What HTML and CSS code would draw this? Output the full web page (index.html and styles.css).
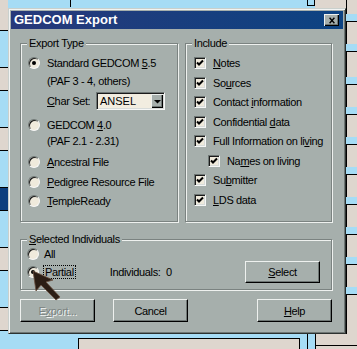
FILE: index.html
```html
<!DOCTYPE html>
<html lang="en">
<head>
  <meta charset="UTF-8" />
  <title>GEDCOM Export</title>
  <link rel="stylesheet" href="styles.css">
</head>
<body>
  <div class="desktop">
    <div class="strip-left">
      <div class="lcell lcell-first"></div>
      <div class="lcell"></div>
      <div class="lcell"></div>
      <div class="lcell lcell-selected"></div>
      <div class="lcell"></div>
      <div class="lcell"></div>
    </div>

    <div class="strip-top">
      <div class="top-gap"></div>
      <div class="top-line"></div>
      <div class="top-fill"></div>
      <div class="top-box"></div>
      <div class="top-cell"></div>
    </div>

    <div class="strip-right">
      <div class="rcell rcell-first"></div>
      <div class="rcell"></div>
      <div class="rcell rcell-tall"></div>
      <div class="rcell"></div>
      <div class="rcell"></div>
      <div class="rcell"></div>
      <div class="rcell"></div>
      <div class="rcell"></div>
      <div class="rcell"></div>
      <div class="rcell"></div>
      <div class="rcell rcell-last"></div>
    </div>

    <div class="dialog">
      <div class="titlebar">
        <span class="title">GEDCOM Export</span>
        <span class="close-btn">
          <svg viewBox="0 0 10 8"><path d="M2 0.5 L8 7.5 M8 0.5 L2 7.5"/></svg>
        </span>
      </div>

      <div class="dialog-body">
        <div class="group-row">
          <div class="group group-export">
            <span class="legend">Export Type</span>
            <div class="opt">
              <span class="radio on"></span>
              <span>Standard GEDCOM <u>5</u>.5</span>
            </div>
            <div class="opt-note note-first">(PAF 3 - 4, others)</div>
            <div class="charset-row">
              <span class="charset-label"><u>C</u>har Set:</span>
              <div class="combo">
                <span class="combo-value">ANSEL</span>
                <span class="combo-btn">
                  <svg viewBox="0 0 12 14"><polygon points="3,6 10,6 6.5,9.5"/></svg>
                </span>
              </div>
            </div>
            <div class="opt opt-gedcom4">
              <span class="radio"></span>
              <span>GEDCOM <u>4</u>.0</span>
            </div>
            <div class="opt-note">(PAF 2.1 - 2.31)</div>
            <div class="opt opt-ancestral">
              <span class="radio"></span>
              <span><u>A</u>ncestral File</span>
            </div>
            <div class="opt opt-pedigree">
              <span class="radio"></span>
              <span><u>P</u>edigree Resource File</span>
            </div>
            <div class="opt opt-temple">
              <span class="radio"></span>
              <span><u>T</u>empleReady</span>
            </div>
          </div>

          <div class="group group-include">
            <span class="legend">Include</span>
            <div class="check-row">
              <span class="check"><svg viewBox="0 0 8 8"><polyline points="1,3.5 3,5.5 7,1.5"/></svg></span>
              <span><u>N</u>otes</span>
            </div>
            <div class="check-row">
              <span class="check"><svg viewBox="0 0 8 8"><polyline points="1,3.5 3,5.5 7,1.5"/></svg></span>
              <span>So<u>u</u>rces</span>
            </div>
            <div class="check-row">
              <span class="check"><svg viewBox="0 0 8 8"><polyline points="1,3.5 3,5.5 7,1.5"/></svg></span>
              <span>Contact <u>i</u>nformation</span>
            </div>
            <div class="check-row">
              <span class="check"><svg viewBox="0 0 8 8"><polyline points="1,3.5 3,5.5 7,1.5"/></svg></span>
              <span>Confidential <u>d</u>ata</span>
            </div>
            <div class="check-row">
              <span class="check"><svg viewBox="0 0 8 8"><polyline points="1,3.5 3,5.5 7,1.5"/></svg></span>
              <span>Full Information on li<u>v</u>ing</span>
            </div>
            <div class="check-row check-nested">
              <span class="check"><svg viewBox="0 0 8 8"><polyline points="1,3.5 3,5.5 7,1.5"/></svg></span>
              <span>Na<u>m</u>es on living</span>
            </div>
            <div class="check-row">
              <span class="check"><svg viewBox="0 0 8 8"><polyline points="1,3.5 3,5.5 7,1.5"/></svg></span>
              <span>Su<u>b</u>mitter</span>
            </div>
            <div class="check-row">
              <span class="check"><svg viewBox="0 0 8 8"><polyline points="1,3.5 3,5.5 7,1.5"/></svg></span>
              <span><u>L</u>DS data</span>
            </div>
          </div>
        </div>

        <div class="group group-selected">
          <span class="legend"><u>S</u>elected Individuals</span>
          <div class="sel-row">
            <span class="radio"></span>
            <span class="sel-label">All</span>
          </div>
          <div class="sel-row sel-row-partial">
            <span class="radio on"></span>
            <span class="sel-label focus">Partial</span>
            <span class="count">Individuals:&nbsp; 0</span>
            <span class="btn btn-select"><u>S</u>elect</span>
          </div>
        </div>

        <div class="button-row">
          <span class="btn btn-disabled">E<u>x</u>port...</span>
          <span class="btn btn-cancel">Cancel</span>
          <span class="btn btn-help"><u>H</u>elp</span>
        </div>
      </div>

      <svg class="cursor" viewBox="0 0 32 34">
        <polygon points="3,3 6,23 11,17 26,32 30,29 16,14 23,12"/>
      </svg>
    </div>

    <div class="strip-bottom">
      <div class="bottom-gap"></div>
      <div class="bottom-box"></div>
      <div class="bottom-gap-s"></div>
      <div class="bottom-line"></div>
      <div class="bottom-gap-s"></div>
      <div class="bottom-cell"><div class="bottom-cell-top"></div></div>
    </div>
  </div>
</body>
</html>
```

FILE: styles.css
```css
* {
  box-sizing: border-box;
}

body {
  margin: 0;
  font-family: "Liberation Sans", Arial, sans-serif;
  font-size: 11px;
  letter-spacing: -0.35px;
  white-space: nowrap;
  color: #000;
  background: #a6dcf5;
}

u {
  text-decoration: underline;
}

/* desktop behind the dialog */
.desktop {
  display: grid;
  grid-template-columns: 8px 338px 11px;
  grid-template-rows: 8px 326px 15px;
  width: 357px;
  height: 349px;
  overflow: hidden;
  background: #a6dcf5;
}

.strip-left {
  grid-column: 1;
  grid-row: 1 / 4;
  display: flex;
  flex-direction: column;
}

.lcell {
  flex: none;
  height: 24px;
  margin-top: 36px;
  background: #ded6ce;
  border-top: 1px solid #000;
  border-bottom: 1px solid #000;
}

.lcell-first {
  height: 31px;
  margin-top: 0;
  border-top: none;
}

.lcell-selected {
  background: #0c3e7e;
}

.strip-top {
  grid-column: 2;
  grid-row: 1;
  display: flex;
  align-items: flex-start;
}

.top-gap {
  width: 62px;
}

.top-line {
  width: 1px;
  height: 7px;
  background: #000;
}

.top-fill {
  flex: 1;
}

.top-box {
  width: 8px;
  height: 6px;
  border: 1px solid #000;
  border-top: none;
}

.top-cell {
  width: 31px;
  height: 8px;
  background: #ded6ce;
}

.strip-right {
  grid-column: 3;
  grid-row: 1 / 3;
  display: flex;
  flex-direction: column;
  overflow: hidden;
}

.rcell {
  flex: none;
  height: 23px;
  margin-top: 7px;
  background: #ded6ce;
  border-top: 1px solid #000;
  border-left: 1px solid #000;
}

.rcell-first {
  height: 14px;
  margin-top: 0;
  border-top: none;
}

.rcell-tall {
  height: 26px;
}

.rcell-last {
  flex: 1;
}

.strip-bottom {
  grid-column: 2 / 4;
  grid-row: 3;
  display: flex;
}

.bottom-gap {
  width: 70px;
}

.bottom-box {
  width: 222px;
  margin-top: 4px;
  background: #ded6ce;
  border: 1px solid #000;
  border-bottom: none;
}

.bottom-gap-s {
  width: 7px;
}

.bottom-line {
  width: 1px;
  background: #000;
}

.bottom-cell {
  flex: 1;
  background: #ded6ce;
  border-left: 1px solid #000;
}

.bottom-cell-top {
  height: 12px;
  border-bottom: 1px solid #000;
}

/* dialog window */
.dialog {
  grid-column: 2;
  grid-row: 2;
  position: relative;
  display: flex;
  flex-direction: column;
  padding: 2px;
  background: #a6afac;
  border: 1px solid;
  border-color: #c9d0cd #2c3230 #2c3230 #c9d0cd;
  box-shadow: inset 1px 1px 0 #f2f4f3, inset -1px -1px 0 #6e7674;
}

.titlebar {
  display: flex;
  align-items: center;
  justify-content: space-between;
  height: 18px;
  background: linear-gradient(to right, #27397a, #0c4382);
}

.title {
  padding-left: 3px;
  color: #fff;
  font-size: 13px;
  font-weight: bold;
  letter-spacing: 0;
  line-height: 18px;
}

.close-btn {
  display: flex;
  align-items: center;
  justify-content: center;
  width: 15px;
  height: 12px;
  margin-right: 4px;
  background: #a6afac;
  box-shadow: inset 1px 1px 0 #eef1ef, inset -1px -1px 0 #000, inset -2px -2px 0 #6e7674;
}

.close-btn svg {
  width: 8px;
  height: 7px;
  fill: none;
  stroke: #000;
  stroke-width: 1.7;
}

.dialog-body {
  display: flex;
  flex-direction: column;
  padding: 14px 11px 0 9px;
}

.group-row {
  display: flex;
  gap: 7px;
  height: 179px;
}

.group {
  position: relative;
  display: flex;
  flex-direction: column;
  border: 1px solid #7b8381;
  box-shadow: inset 1px 1px 0 #eef1ef, 1px 1px 0 #eef1ef;
}

.legend {
  position: absolute;
  top: -8px;
  left: 6px;
  padding: 0 2px;
  line-height: 14px;
  background: #a6afac;
}

.group-export {
  width: 158px;
  padding: 11px 6px 0 7px;
}

.group-include {
  flex: 1;
  gap: 3.5px;
  padding: 11px 0 0 8px;
}

.opt {
  display: flex;
  align-items: center;
  gap: 7px;
  height: 16px;
}

.opt-note {
  height: 16px;
  line-height: 16px;
  padding-left: 19px;
}

.note-first {
  margin-top: 2px;
}

.opt-gedcom4 {
  margin-top: 7px;
}

.opt-ancestral {
  margin-top: 5px;
}

.opt-pedigree {
  margin-top: 4px;
}

.opt-temple {
  margin-top: 3px;
}

.radio {
  position: relative;
  flex: none;
  width: 12px;
  height: 12px;
  border-radius: 50%;
  background: #efeadc;
  border: 1px solid;
  border-color: #6e7674 #f6f7f6 #f6f7f6 #6e7674;
  box-shadow: inset 1px 1px 0 #1a1a1a;
}

.radio.on::after {
  content: "";
  position: absolute;
  left: 3px;
  top: 3px;
  width: 4px;
  height: 4px;
  border-radius: 50%;
  background: #000;
}

.charset-row {
  display: flex;
  align-items: center;
  height: 18px;
  margin-top: 3px;
  padding-left: 19px;
}

.charset-label {
  width: 49px;
}

.combo {
  display: flex;
  align-items: center;
  width: 69px;
  height: 18px;
  padding: 2px;
  background: #f2ede0;
  border: 1px solid;
  border-color: #6e7674 #f6f7f6 #f6f7f6 #6e7674;
  box-shadow: inset 1px 1px 0 #1a1a1a, inset -1px -1px 0 #d8dcda;
}

.combo-value {
  flex: 1;
  padding-left: 1px;
  letter-spacing: 0;
}

.combo-btn {
  width: 12px;
  height: 14px;
  margin-right: -1px;
  background: #a6afac;
  box-shadow: inset 1px 1px 0 #eef1ef, inset -1px -1px 0 #000, inset -2px -2px 0 #6e7674;
}

.combo-btn svg {
  display: block;
  width: 12px;
  height: 14px;
  fill: #000;
}

.check-row {
  display: flex;
  align-items: center;
  gap: 7px;
  height: 16px;
}

.check-nested {
  margin-left: 14px;
}

.check {
  display: flex;
  align-items: center;
  justify-content: center;
  flex: none;
  width: 12px;
  height: 12px;
  background: #efeadc;
  border: 1px solid;
  border-color: #6e7674 #f6f7f6 #f6f7f6 #6e7674;
  box-shadow: inset 1px 1px 0 #1a1a1a, inset -1px -1px 0 #d8dcda;
}

.check svg {
  width: 8px;
  height: 8px;
  fill: none;
  stroke: #000;
  stroke-width: 2;
}

.group-selected {
  height: 51px;
  margin-top: 17px;
  padding: 6px 11px 0 6px;
}

.sel-row {
  display: flex;
  align-items: center;
  height: 16px;
}

.sel-label {
  margin-left: 5px;
}

.sel-row-partial {
  height: 22px;
  margin-top: -1px;
}

.focus {
  margin-left: 4px;
  padding: 0 1px;
  line-height: 12px;
  border: 1px dotted #000;
}

.count {
  margin-left: 34px;
}

.btn {
  display: flex;
  align-items: center;
  justify-content: center;
  width: 75px;
  height: 23px;
  background: #a6afac;
  border: 1px solid;
  border-color: #eef1ef #000 #000 #eef1ef;
  box-shadow: inset -1px -1px 0 #6e7674;
}

.btn-select {
  height: 22px;
  margin-left: auto;
}

.button-row {
  display: flex;
  margin-top: 9px;
}

.btn-disabled {
  color: #7b8381;
  text-shadow: 1px 1px 0 #f2f4f3;
}

.btn-cancel {
  margin-left: 18px;
}

.btn-help {
  margin-left: auto;
}

/* mouse pointer over the Partial option */
.cursor {
  position: absolute;
  left: 21px;
  top: 259px;
  width: 32px;
  height: 34px;
  fill: #2b1d14;
  stroke: #6b5040;
  stroke-width: 0.8;
}
```
